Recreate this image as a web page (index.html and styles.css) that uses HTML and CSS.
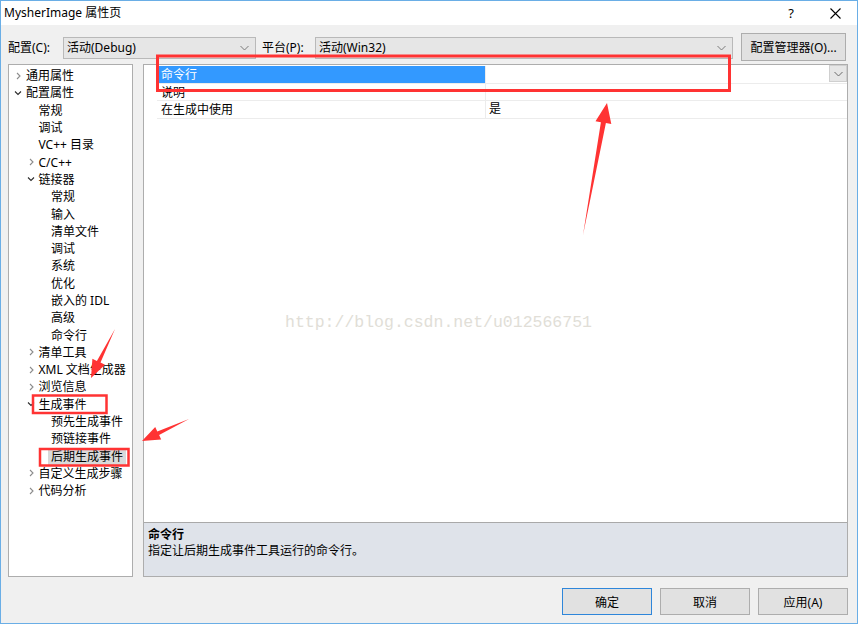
FILE: index.html
```html
<!DOCTYPE html>
<html lang="zh-CN">
<head>
<meta charset="utf-8">
<title>MysherImage 属性页</title>
<link rel="stylesheet" href="styles.css">
</head>
<body>
<div class="window">
  <div class="titlebar">
    <span class="title">MysherImage 属性页</span>
    <span class="tb-btn help">?</span>
    <span class="tb-btn close"><svg width="11" height="11" viewBox="0 0 11 11"><path d="M0.5 0.5 L10.5 10.5 M10.5 0.5 L0.5 10.5" stroke="#000" stroke-width="1.1" fill="none"/></svg></span>
  </div>
  <div class="body">
    <div class="config-row">
      <span class="lbl lbl1">配置(C):</span>
      <div class="combo c1"><span class="combo-text">活动(Debug)</span><svg class="chev" width="9" height="6" viewBox="0 0 9 6"><path d="M0.5 1 L4.5 5 L8.5 1" stroke="#7a7a7a" fill="none"/></svg></div>
      <span class="lbl lbl2">平台(P):</span>
      <div class="combo c2"><span class="combo-text">活动(Win32)</span><svg class="chev" width="9" height="6" viewBox="0 0 9 6"><path d="M0.5 1 L4.5 5 L8.5 1" stroke="#7a7a7a" fill="none"/></svg></div>
      <button class="btn mgr">配置管理器(O)...</button>
    </div>
    <div class="main">
      <div class="tree">
        <div class="item l0"><span class="tw"><svg width="8" height="8" viewBox="0 0 8 8"><path class="col" d="M3 1 L6 4 L3 7"/></svg></span><span class="tx">通用属性</span></div>
        <div class="item l0"><span class="tw"><svg width="8" height="8" viewBox="0 0 8 8"><path class="exp" d="M1 2.5 L4 5.5 L7 2.5"/></svg></span><span class="tx">配置属性</span></div>
        <div class="item l1"><span class="tw"></span><span class="tx">常规</span></div>
        <div class="item l1"><span class="tw"></span><span class="tx">调试</span></div>
        <div class="item l1"><span class="tw"></span><span class="tx">VC++ 目录</span></div>
        <div class="item l1"><span class="tw"><svg width="8" height="8" viewBox="0 0 8 8"><path class="col" d="M3 1 L6 4 L3 7"/></svg></span><span class="tx">C/C++</span></div>
        <div class="item l1"><span class="tw"><svg width="8" height="8" viewBox="0 0 8 8"><path class="exp" d="M1 2.5 L4 5.5 L7 2.5"/></svg></span><span class="tx">链接器</span></div>
        <div class="item l2"><span class="tw"></span><span class="tx">常规</span></div>
        <div class="item l2"><span class="tw"></span><span class="tx">输入</span></div>
        <div class="item l2"><span class="tw"></span><span class="tx">清单文件</span></div>
        <div class="item l2"><span class="tw"></span><span class="tx">调试</span></div>
        <div class="item l2"><span class="tw"></span><span class="tx">系统</span></div>
        <div class="item l2"><span class="tw"></span><span class="tx">优化</span></div>
        <div class="item l2"><span class="tw"></span><span class="tx">嵌入的 IDL</span></div>
        <div class="item l2"><span class="tw"></span><span class="tx">高级</span></div>
        <div class="item l2"><span class="tw"></span><span class="tx">命令行</span></div>
        <div class="item l1"><span class="tw"><svg width="8" height="8" viewBox="0 0 8 8"><path class="col" d="M3 1 L6 4 L3 7"/></svg></span><span class="tx">清单工具</span></div>
        <div class="item l1"><span class="tw"><svg width="8" height="8" viewBox="0 0 8 8"><path class="col" d="M3 1 L6 4 L3 7"/></svg></span><span class="tx">XML 文档生成器</span></div>
        <div class="item l1"><span class="tw"><svg width="8" height="8" viewBox="0 0 8 8"><path class="col" d="M3 1 L6 4 L3 7"/></svg></span><span class="tx">浏览信息</span></div>
        <div class="item l1"><span class="tw"><svg width="8" height="8" viewBox="0 0 8 8"><path class="exp" d="M1 2.5 L4 5.5 L7 2.5"/></svg></span><span class="tx">生成事件</span></div>
        <div class="item l2"><span class="tw"></span><span class="tx">预先生成事件</span></div>
        <div class="item l2"><span class="tw"></span><span class="tx">预链接事件</span></div>
        <div class="item l2"><span class="tw"></span><span class="tx sel">后期生成事件</span></div>
        <div class="item l1"><span class="tw"><svg width="8" height="8" viewBox="0 0 8 8"><path class="col" d="M3 1 L6 4 L3 7"/></svg></span><span class="tx">自定义生成步骤</span></div>
        <div class="item l1"><span class="tw"><svg width="8" height="8" viewBox="0 0 8 8"><path class="col" d="M3 1 L6 4 L3 7"/></svg></span><span class="tx">代码分析</span></div>
      </div>
      <div class="panel">
        <div class="grid">
          <div class="row">
            <div class="name selected">命令行</div>
            <div class="val"><span class="dd"><svg width="9" height="6" viewBox="0 0 9 6"><path d="M0.5 1 L4.5 5 L8.5 1" stroke="#6a6a6a" fill="none"/></svg></span></div>
          </div>
          <div class="row">
            <div class="name">说明</div>
            <div class="val"></div>
          </div>
          <div class="row">
            <div class="name">在生成中使用</div>
            <div class="val">是</div>
          </div>
        </div>
        <div class="desc">
          <div class="desc-title">命令行</div>
          <div class="desc-text">指定让后期生成事件工具运行的命令行。</div>
        </div>
      </div>
    </div>
    <div class="buttons">
      <button class="btn dlg default">确定</button>
      <button class="btn dlg">取消</button>
      <button class="btn dlg">应用(A)</button>
    </div>
  </div>
  <div class="watermark">http://blog.csdn.net/u012566751</div>
  <svg class="annot" width="858" height="624" viewBox="0 0 858 624">
    <g fill="none" stroke="#ff3333">
      <rect x="157.5" y="56" width="572" height="34.5" stroke-width="3"/>
      <rect x="33" y="395.5" width="73.5" height="17.5" stroke-width="2.5"/>
      <rect x="40" y="449" width="88.5" height="16.5" stroke-width="2.5"/>
    </g>
    <g fill="#ff3333">
      <polygon points="583,235 600.9,122.3 595.5,121.3 607,103 611.3,124.1 605.9,123.1"/>
      <polygon points="115,329 96.9,360.9 92.4,358.7 91,378 105,364.7 100.5,362.6"/>
      <polygon points="189,419 157.3,431.4 155.2,426.9 142,441 161.2,439.5 159.1,435"/>
    </g>
  </svg>
</div>
</body>
</html>
```

FILE: styles.css
```css
html, body {
  margin: 0;
  padding: 0;
}
body {
  font-family: "Noto Sans", "Noto Sans CJK SC", sans-serif;
  font-size: 12px;
  color: #000;
  background: #f0f0f0;
}
.window {
  position: relative;
  width: 858px;
  height: 624px;
  box-sizing: border-box;
  border: 1px solid #6aaee6;
  background: #f0f0f0;
  display: flex;
  flex-direction: column;
  overflow: hidden;
}
.titlebar {
  height: 24px;
  flex: none;
  background: #fff;
  display: flex;
  align-items: center;
  padding-left: 3px;
}
.title {
  font-size: 12px;
  line-height: 16px;
  flex: 1;
}
.tb-btn {
  width: 44px;
  height: 24px;
  display: flex;
  align-items: center;
  justify-content: center;
}
.help {
  font-size: 13px;
}
.body {
  flex: 1;
  display: flex;
  flex-direction: column;
  padding: 8px 9px 8px 7px;
  min-height: 0;
}
.config-row {
  height: 28px;
  flex: none;
  display: flex;
  align-items: center;
  padding-right: 2px;
}
.lbl {
  line-height: 16px;
  margin-top: 2px;
}
.lbl1 {
  width: 55px;
}
.lbl2 {
  width: 53px;
  margin-left: 6px;
}
.combo {
  height: 22px;
  margin-top: 2px;
  box-sizing: border-box;
  border: 1px solid #b9b9b9;
  background: #e6e6e6;
  display: flex;
  align-items: center;
  padding: 0 6px 0 3px;
}
.c1 {
  width: 193px;
}
.c2 {
  flex: 1;
}
.combo-text {
  flex: 1;
  line-height: 16px;
}
.chev {
  display: block;
}
.btn {
  font-family: "Noto Sans", "Noto Sans CJK SC", sans-serif;
  font-size: 12px;
  color: #000;
  background: #e1e1e1;
  border: 1px solid #adadad;
  padding: 0;
  margin: 0;
}
.mgr {
  width: 105px;
  height: 28px;
  margin-left: 8px;
}
.main {
  flex: 1;
  min-height: 0;
  margin-top: 3px;
  display: flex;
  gap: 10px;
}
.tree {
  width: 125px;
  flex: none;
  box-sizing: border-box;
  border: 1px solid #adadad;
  background: #fff;
  padding-top: 2px;
}
.item {
  height: 17.3px;
  display: flex;
  align-items: center;
  white-space: nowrap;
}
.l0 { padding-left: 5px; }
.l1 { padding-left: 17.5px; }
.l2 { padding-left: 30px; }
.tw {
  width: 12px;
  flex: none;
  display: flex;
  align-items: center;
}
.tw svg {
  display: block;
}
.col {
  fill: none;
  stroke: #8c8c8c;
  stroke-width: 1.1;
}
.exp {
  fill: none;
  stroke: #2b2b2b;
  stroke-width: 1.1;
}
.tx {
  line-height: 17px;
}
.tx.sel {
  background: #d9d9d9;
  margin-left: -3px;
  padding: 0 3px;
}
.panel {
  flex: 1;
  box-sizing: border-box;
  border: 1px solid #adadad;
  background: #fff;
  display: flex;
  flex-direction: column;
}
.grid {
  flex: 1;
  padding-top: 1px;
}
.row {
  display: flex;
  height: 17.5px;
  box-sizing: border-box;
  margin-left: 13px;
  border-bottom: 1px solid #ececec;
}
.name {
  width: 329px;
  flex: none;
  box-sizing: border-box;
  padding-left: 4px;
  line-height: 17px;
  border-right: 1px solid #ececec;
}
.name.selected {
  background: #3399ff;
  color: #fff;
}
.val {
  flex: 1;
  display: flex;
  align-items: center;
  justify-content: space-between;
  padding-left: 3px;
  line-height: 16px;
}
.dd {
  margin-left: auto;
  width: 18px;
  height: 17px;
  margin-top: -1px;
  box-sizing: border-box;
  border: 1px solid #cfcfcf;
  background: #e6e6e6;
  display: flex;
  align-items: center;
  justify-content: center;
}
.desc {
  height: 54px;
  flex: none;
  box-sizing: border-box;
  border-top: 1px solid #a9a9a9;
  background: #dfe3ea;
  padding: 4px 4px 0 4px;
  line-height: 16px;
}
.desc-title {
  font-weight: bold;
}
.buttons {
  flex: none;
  margin-top: 11px;
  height: 27px;
  display: flex;
  justify-content: flex-end;
  gap: 8px;
}
.dlg {
  width: 90px;
  height: 27px;
}
.dlg.default {
  border-color: #2e86da;
}
.watermark {
  position: absolute;
  left: 284px;
  top: 312px;
  font-family: "Liberation Mono", monospace;
  font-size: 16.5px;
  line-height: 20px;
  color: #e1ded7;
  white-space: nowrap;
}
.annot {
  position: absolute;
  left: -1px;
  top: -1px;
  pointer-events: none;
}
```
